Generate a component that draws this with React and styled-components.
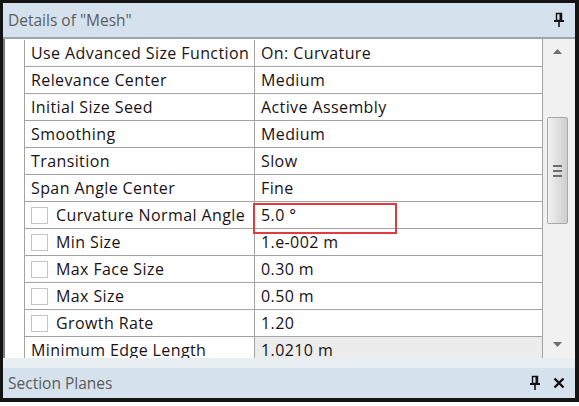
import React from "react";
import styled, { createGlobalStyle } from "styled-components";

const GlobalStyle = createGlobalStyle`
  html, body {
    margin: 0;
    padding: 0;
    background: #ffffff;
  }
  body {
    font-family: "Open Sans", "Noto Sans", sans-serif;
  }
`;

const Frame = styled.div`
  box-sizing: border-box;
  width: 579px;
  height: 402px;
  border-style: solid;
  border-color: #141414;
  border-width: 3px 4px 4px 3px;
  display: flex;
  flex-direction: column;
  background: #d5e2ed;
  overflow: hidden;
`;

const PaneBar = styled.div`
  flex: none;
  height: ${(p) => p.$height}px;
  display: flex;
  align-items: center;
  padding: 0 10px 0 5px;
  background: #d5e2ed;
  color: #5c5c5c;
  font-size: 15.5px;
  border-bottom: ${(p) => (p.$divider ? "2px solid #9ba6b1" : "none")};
`;

const PaneTitle = styled.span`
  flex: 1;
`;

const BarIcons = styled.div`
  display: flex;
  align-items: center;
  gap: 12px;
`;

const Body = styled.div`
  flex: none;
  height: 319px;
  display: flex;
  background: #ffffff;
  border-left: 2px solid #7d7d7d;
  overflow: hidden;
`;

const Grid = styled.div`
  position: relative;
  flex: 1;
  display: flex;
  flex-direction: column;
  padding-top: 1px;
  border-right: 1px solid #a3a3a3;
`;

const Row = styled.div`
  flex: none;
  height: 27px;
  display: grid;
  grid-template-columns: 20px 230px 1fr;
  font-size: 16px;
  letter-spacing: 0.4px;
  color: #1a1216;
`;

const Gutter = styled.div`
  border-right: 1px solid #a3a3a3;
`;

const Cell = styled.div`
  box-sizing: border-box;
  display: flex;
  align-items: center;
  gap: 8px;
  padding-left: 6px;
  border-bottom: 1px solid #a3a3a3;
  border-right: ${(p) => (p.$name ? "1px solid #a3a3a3" : "none")};
  background: ${(p) => (p.$readonly ? "#ececec" : "#ffffff")};
  white-space: nowrap;
  overflow: hidden;
`;

const Check = styled.span`
  box-sizing: border-box;
  width: 17px;
  height: 17px;
  border: 1px solid #c4c4c4;
  background: #ffffff;
  flex: none;
`;

const Highlight = styled.div`
  position: absolute;
  left: 248px;
  top: 164px;
  width: 140px;
  height: 27px;
  border: 2px solid #e23a3f;
  pointer-events: none;
`;

const Scrollbar = styled.div`
  flex: none;
  width: 28px;
  padding-right: 4px;
  background: #f1f1f1;
  display: flex;
  flex-direction: column;
  align-items: center;
`;

const Arrow = styled.div`
  flex: none;
  height: 26px;
  display: flex;
  align-items: center;
  justify-content: center;
  margin-top: ${(p) => p.$top || 0}px;
`;

const Thumb = styled.div`
  box-sizing: border-box;
  margin-top: 52px;
  width: 21px;
  height: 111px;
  border: 1px solid #a9a9a9;
  border-radius: 2px;
  background: linear-gradient(to right, #f2f2f2, #dcdcdc 60%, #cfcfcf);
  display: flex;
  flex-direction: column;
  align-items: center;
  justify-content: center;
  gap: 3px;
`;

const Grip = styled.span`
  width: 9px;
  height: 2px;
  background: #6d6d6d;
`;

const Splitter = styled.div`
  flex: none;
  height: 10px;
  background: #e9eef3;
`;

const rows = [
  { name: "Use Advanced Size Function", value: "On: Curvature" },
  { name: "Relevance Center", value: "Medium" },
  { name: "Initial Size Seed", value: "Active Assembly" },
  { name: "Smoothing", value: "Medium" },
  { name: "Transition", value: "Slow" },
  { name: "Span Angle Center", value: "Fine" },
  { name: "Curvature Normal Angle", value: "5.0 °", check: true },
  { name: "Min Size", value: "1.e-002 m", check: true },
  { name: "Max Face Size", value: "0.30 m", check: true },
  { name: "Max Size", value: "0.50 m", check: true },
  { name: "Growth Rate", value: "1.20", check: true },
  { name: "Minimum Edge Length", value: "1.0210 m", readonly: true },
];

function Pin() {
  return (
    <svg width="12" height="16" viewBox="0 0 12 16">
      <path d="M3.5 1.5h5v7h-5z" fill="none" stroke="#111" strokeWidth="1.4" />
      <path d="M7.5 1.5v7" stroke="#111" strokeWidth="2" />
      <path d="M1 9h10" stroke="#111" strokeWidth="2" />
      <path d="M6 9v6" stroke="#111" strokeWidth="1.6" />
    </svg>
  );
}

function Close() {
  return (
    <svg width="12" height="12" viewBox="0 0 12 12">
      <path d="M1.5 1.5l9 9M10.5 1.5l-9 9" stroke="#111" strokeWidth="2.4" />
    </svg>
  );
}

function Triangle({ down }) {
  return (
    <svg width="9" height="6" viewBox="0 0 9 6">
      <path d={down ? "M0 0h9L4.5 5z" : "M0 5h9L4.5 0z"} fill="#6f6f6f" />
    </svg>
  );
}

export default function App() {
  return (
    <>
      <GlobalStyle />
      <Frame>
        <PaneBar $height={34} $divider>
          <PaneTitle>Details of "Mesh"</PaneTitle>
          <BarIcons>
            <Pin />
          </BarIcons>
        </PaneBar>
        <Body>
          <Grid>
            {rows.map((r) => (
              <Row key={r.name}>
                <Gutter />
                <Cell $name>
                  {r.check && <Check />}
                  {r.name}
                </Cell>
                <Cell $readonly={r.readonly}>{r.value}</Cell>
              </Row>
            ))}
            <Highlight />
          </Grid>
          <Scrollbar>
            <Arrow>
              <Triangle />
            </Arrow>
            <Thumb>
              <Grip />
              <Grip />
              <Grip />
            </Thumb>
            <Arrow $top={108}>
              <Triangle down />
            </Arrow>
          </Scrollbar>
        </Body>
        <Splitter />
        <PaneBar $height={30}>
          <PaneTitle>Section Planes</PaneTitle>
          <BarIcons>
            <Pin />
            <Close />
          </BarIcons>
        </PaneBar>
      </Frame>
    </>
  );
}
